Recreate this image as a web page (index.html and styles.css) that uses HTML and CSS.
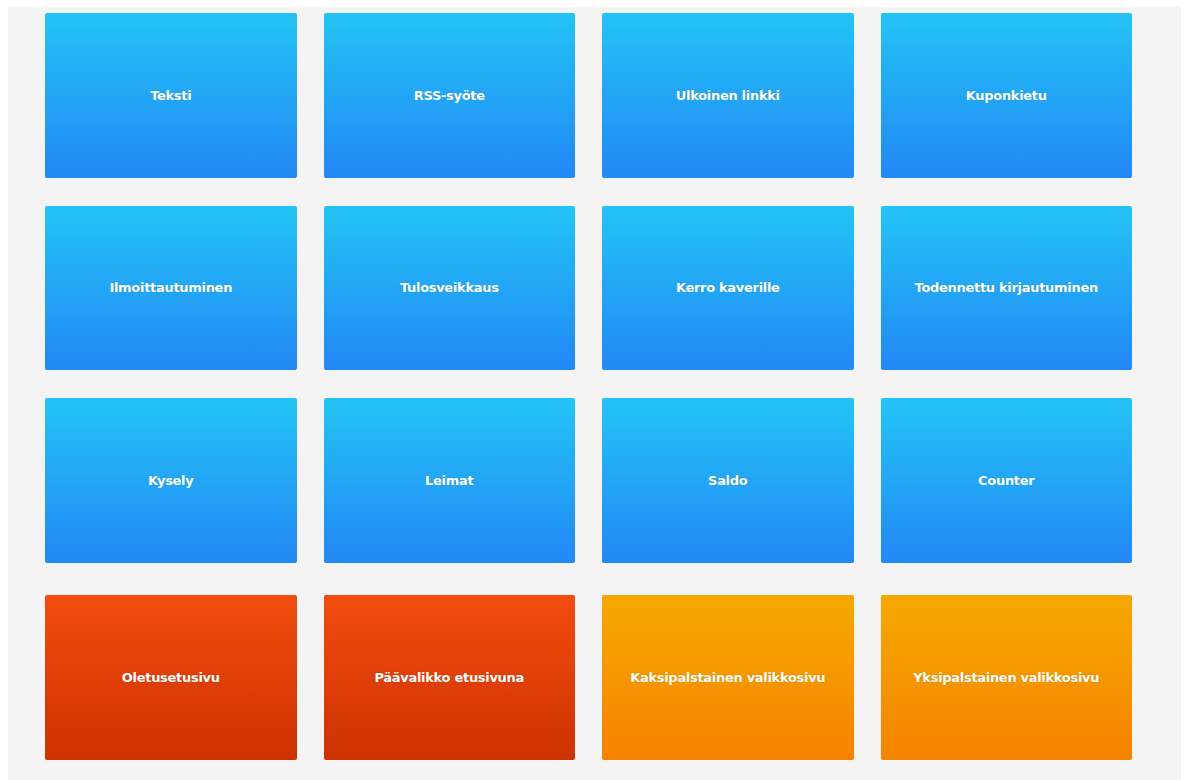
FILE: index.html
```html
<!DOCTYPE html>
<html lang="fi">
<head>
<meta charset="utf-8">
<title>Sivutyypit</title>
<link rel="stylesheet" href="styles.css">
</head>
<body>
<main class="panel">
  <section class="grid">
    <a class="tile tile-blue" href="#">Teksti</a>
    <a class="tile tile-blue" href="#">RSS-syöte</a>
    <a class="tile tile-blue" href="#">Ulkoinen linkki</a>
    <a class="tile tile-blue" href="#">Kuponkietu</a>
    <a class="tile tile-blue" href="#">Ilmoittautuminen</a>
    <a class="tile tile-blue" href="#">Tulosveikkaus</a>
    <a class="tile tile-blue" href="#">Kerro kaverille</a>
    <a class="tile tile-blue" href="#">Todennettu kirjautuminen</a>
    <a class="tile tile-blue" href="#">Kysely</a>
    <a class="tile tile-blue" href="#">Leimat</a>
    <a class="tile tile-blue" href="#">Saldo</a>
    <a class="tile tile-blue" href="#">Counter</a>
  </section>
  <section class="grid grid-front">
    <a class="tile tile-red" href="#">Oletusetusivu</a>
    <a class="tile tile-red" href="#">Päävalikko etusivuna</a>
    <a class="tile tile-orange" href="#">Kaksipalstainen valikkosivu</a>
    <a class="tile tile-orange" href="#">Yksipalstainen valikkosivu</a>
  </section>
</main>
</body>
</html>
```
FILE: styles.css
```css
html, body {
  margin: 0;
  padding: 0;
  background: #ffffff;
}

body {
  padding: 7px 5px 0 8px;
  font-family: "DejaVu Sans", Verdana, sans-serif;
}

.panel {
  box-sizing: border-box;
  background: #f4f4f4;
  border-radius: 3px 3px 0 0;
  padding: 6px 49px 12px 37px;
  min-height: calc(100vh - 7px);
}

.grid {
  display: grid;
  grid-template-columns: repeat(4, 1fr);
  grid-auto-rows: 164.5px;
  column-gap: 27px;
  row-gap: 28px;
}

.grid-front {
  margin-top: 32.5px;
  grid-auto-rows: 165px;
}

.tile {
  display: flex;
  align-items: center;
  justify-content: center;
  text-align: center;
  border-radius: 2px;
  color: #ffffff;
  font-size: 13px;
  font-weight: bold;
  letter-spacing: -0.3px;
  text-decoration: none;
  text-shadow: 0 0 1px rgba(0, 0, 0, 0.15);
  box-shadow: 0 0 1px rgba(0, 0, 0, 0.08);
}

.tile-blue {
  background: linear-gradient(to bottom, #23c4f5, #2288f5);
}

.tile-red {
  background: linear-gradient(to bottom, #f24c0e, #cd3200);
}

.tile-orange {
  background: linear-gradient(to bottom, #f6a900, #f58300);
}
```
